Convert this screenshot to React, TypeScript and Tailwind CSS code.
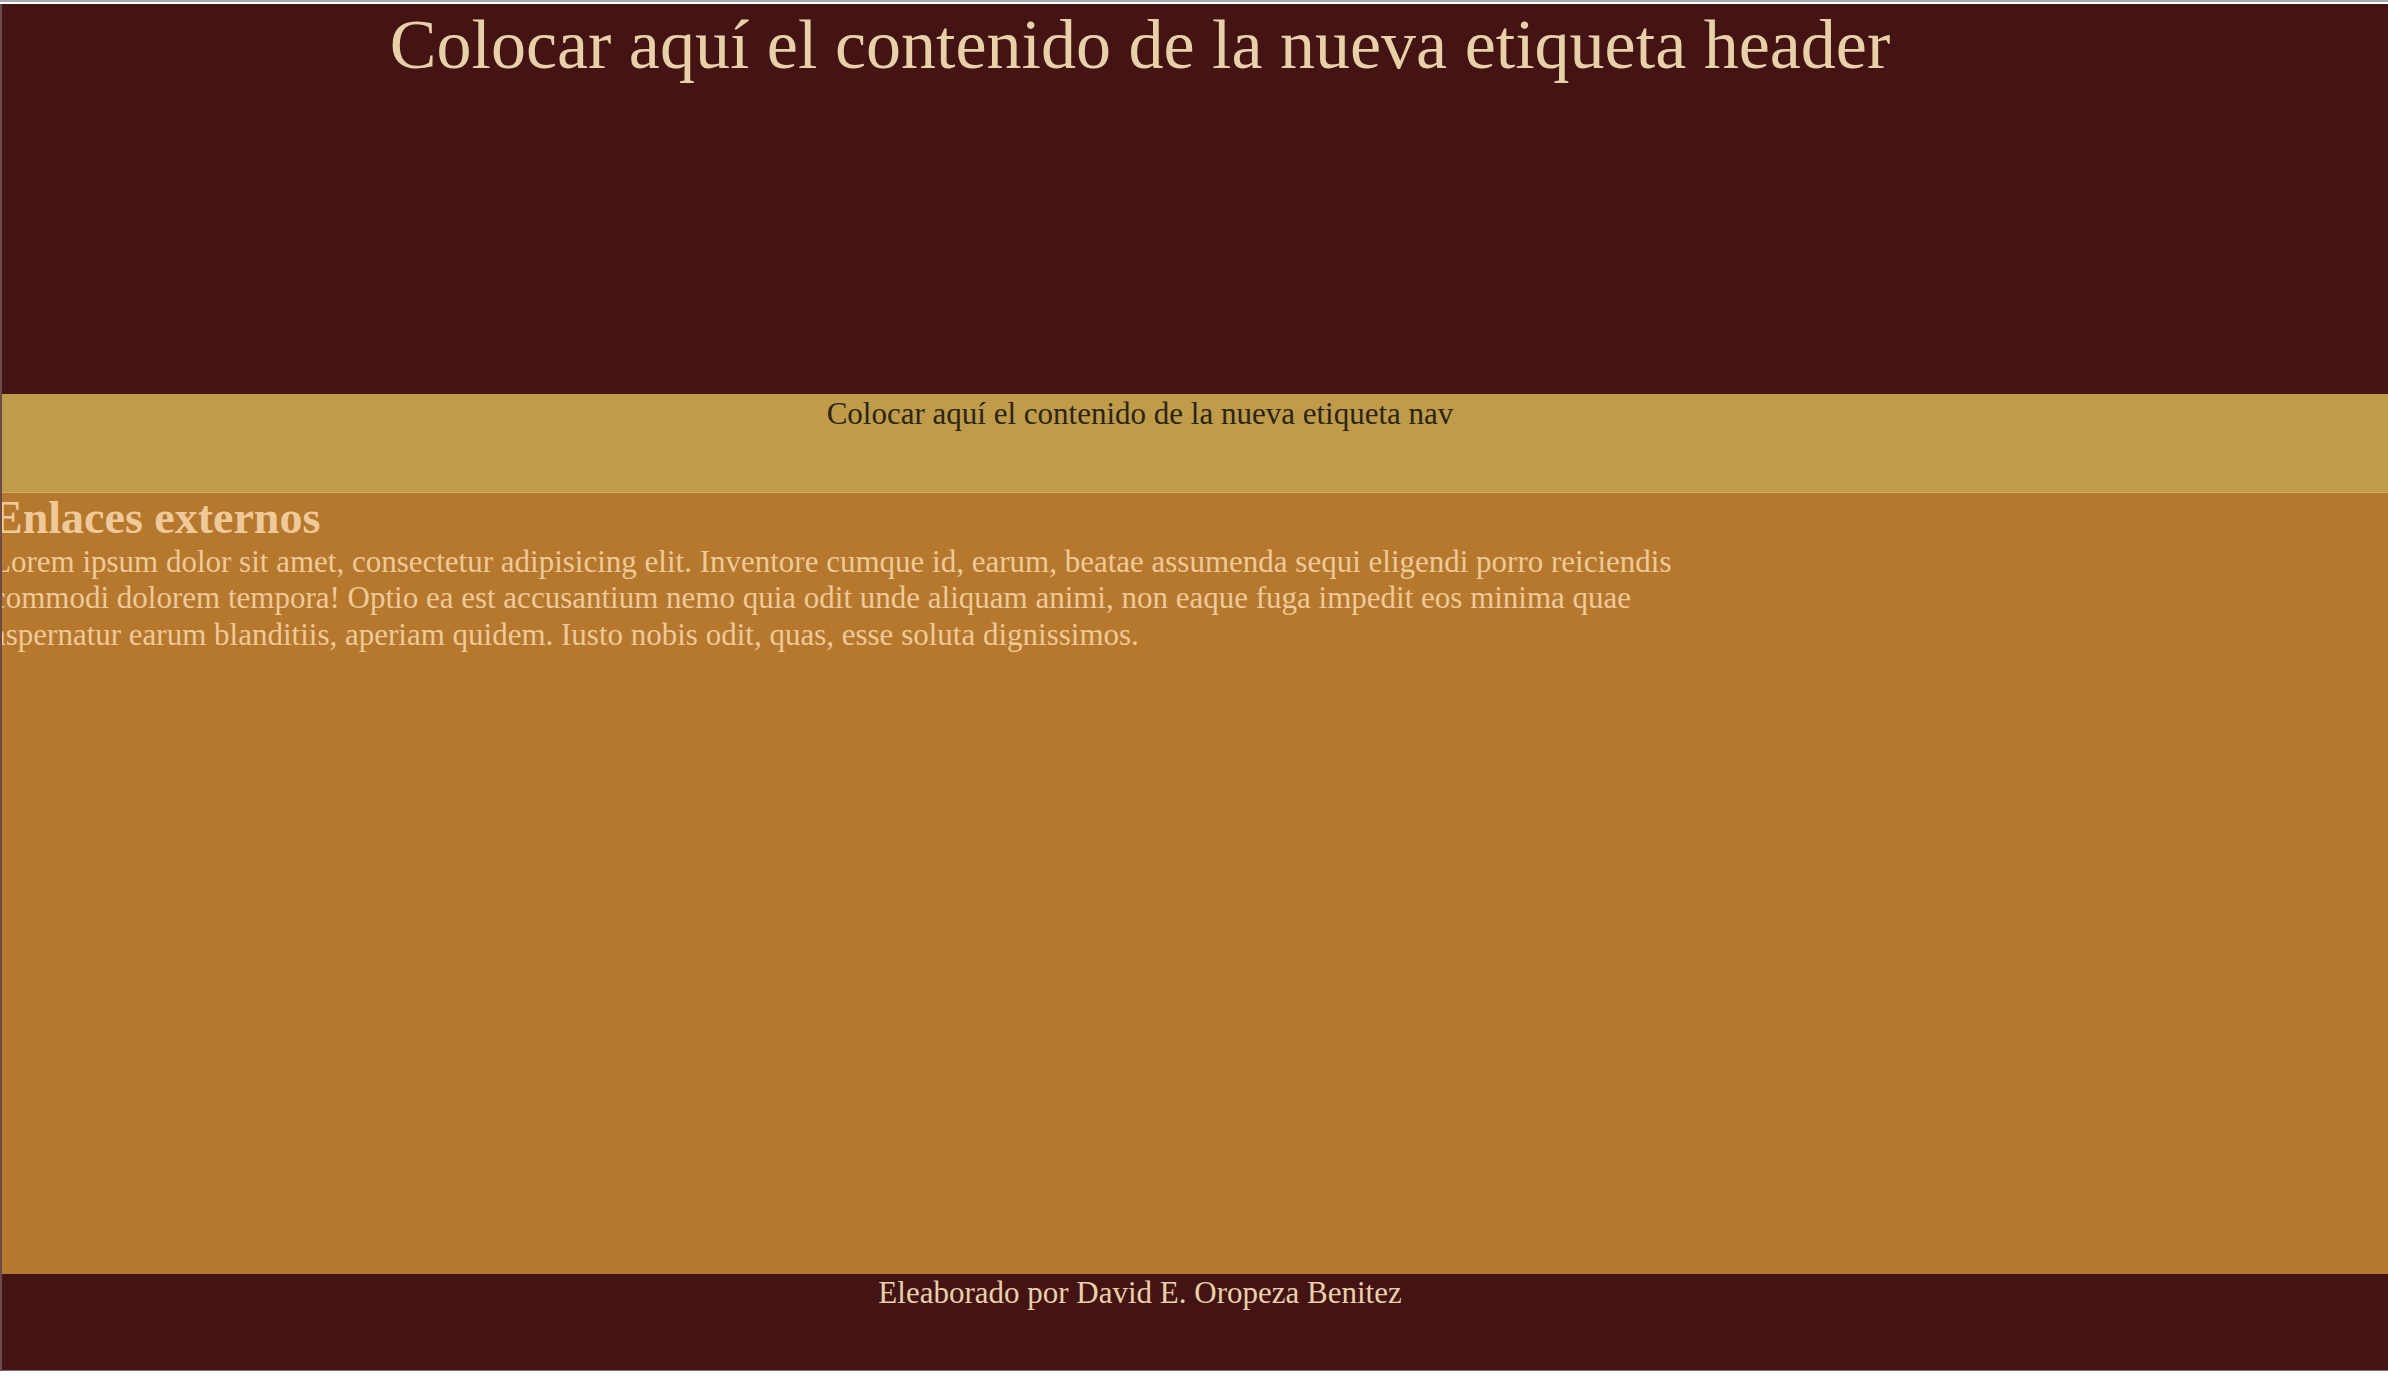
import React from "react";

export default function App() {
  const serif = { fontFamily: '"Liberation Serif", "Times New Roman", serif' };
  return (
    <div className="min-h-screen w-full bg-white" style={serif}>
      <div className="h-[2px] bg-[#a9a9ad]" />
      <div className="h-[2px] bg-white" />
      <div className="border-l-2 border-[#6b4a4a] overflow-hidden">
        <header className="h-[390px] bg-[#441414] pr-[110px] text-center">
          <h1 className="pt-[6px] text-[70px] leading-none text-[#e8d0a9] font-normal">
            Colocar aquí el contenido de la nueva etiqueta header
          </h1>
        </header>
        <nav className="h-[99px] bg-[#bf9b4a] pr-[110px] text-center border-b border-[#cfae68]">
          <p className="pt-[1px] text-[31px] leading-[1.2] text-[#2b2514]">
            Colocar aquí el contenido de la nueva etiqueta nav
          </p>
        </nav>
        <main className="h-[781px] bg-[#b5782d]">
          <section className="ml-[-10px] w-[1725px]">
            <h2 className="text-[46px] font-bold leading-[1.1] text-[#efc99a]">
              Enlaces externos
            </h2>
            <p className="text-[31px] leading-[36.5px] text-[#efc99a]">
              Lorem ipsum dolor sit amet, consectetur adipisicing elit. Inventore cumque id, earum, beatae assumenda sequi eligendi porro reiciendis commodi dolorem tempora! Optio ea est accusantium nemo quia odit unde aliquam animi, non eaque fuga impedit eos minima quae aspernatur earum blanditiis, aperiam quidem. Iusto nobis odit, quas, esse soluta dignissimos.
            </p>
          </section>
        </main>
        <footer className="h-[97px] bg-[#441414] pr-[110px] text-center border-b border-[#8a7070]">
          <p className="pt-0 text-[31px] leading-[1.2] text-[#e8d0a9]">
            Eleaborado por David E. Oropeza Benitez
          </p>
        </footer>
      </div>
    </div>
  );
}
